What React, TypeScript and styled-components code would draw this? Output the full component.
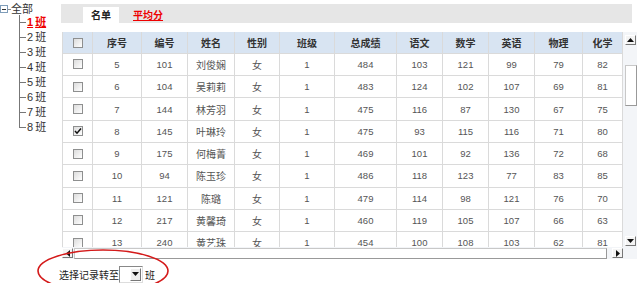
import React from "react";
import styled, { createGlobalStyle } from "styled-components";

const Global = createGlobalStyle`
  html, body { margin: 0; padding: 0; background: #fff; }
  body { font-family: "Liberation Sans", "Noto Sans CJK SC", sans-serif; color: #333; }
`;

const Page = styled.div`
  position: relative;
  display: flex;
  width: 639px;
  height: 283px;
  overflow: hidden;
`;

const Tree = styled.div`
  width: 61px;
  flex: none;
  font-family: "Liberation Sans", "Noto Sans CJK SC", sans-serif;
  font-size: 11px;
  color: #333;
`;

const RootRow = styled.div`
  display: flex;
  align-items: center;
  height: 15px;
`;

const MinusBox = styled.span`
  box-sizing: border-box;
  width: 8px;
  height: 8px;
  margin-top: 3px;
  border: 1px solid #7f9db9;
  background: #fff;
  display: flex;
  align-items: center;
  justify-content: center;
  &::after {
    content: "";
    width: 4px;
    height: 1px;
    background: #333;
  }
`;

const Dash = styled.span`
  width: 3px;
  height: 1px;
  margin-top: 3px;
  background: #888;
`;

const Children = styled.div`
  margin-left: 19px;
`;

const Item = styled.div<{ $last?: boolean; $active?: boolean }>`
  position: relative;
  height: 15px;
  line-height: 15px;
  padding-left: 8px;
  color: ${(p) => (p.$active ? "#e00" : "#333")};
  font-weight: ${(p) => (p.$active ? "bold" : "normal")};
  text-decoration: ${(p) => (p.$active ? "underline" : "none")};
  &::before {
    content: "";
    position: absolute;
    left: 0;
    top: 7px;
    width: 7px;
    height: 1px;
    background: #777;
  }
  &::after {
    content: "";
    position: absolute;
    left: 0;
    top: 0;
    width: 1px;
    height: ${(p) => (p.$last ? "8px" : "15px")};
    background: #777;
  }
`;

const Num = styled.span`
  margin-right: 2px;
`;

const Main = styled.div`
  display: flex;
  flex-direction: column;
  width: 578px;
  padding-top: 4px;
`;

const TabBar = styled.div`
  display: flex;
  align-items: flex-end;
  width: 571px;
  height: 20px;
  padding-left: 22px;
  box-sizing: border-box;
  background: #e6e6e6;
`;

const Tab = styled.div<{ $active?: boolean }>`
  height: 16px;
  line-height: 16px;
  padding: 0 8px;
  margin-right: 6px;
  font-family: "Noto Sans CJK SC", sans-serif;
  font-size: 10px;
  font-weight: bold;
  background: ${(p) => (p.$active ? "#fff" : "transparent")};
  color: ${(p) => (p.$active ? "#222" : "#e00")};
  text-decoration: ${(p) => (p.$active ? "none" : "underline")};
`;

const GridArea = styled.div`
  display: grid;
  grid-template-columns: 561px 14px;
  grid-template-rows: 215px 12px;
  margin-top: 9px;
  margin-left: 1px;
`;

const Viewport = styled.div`
  grid-column: 1;
  grid-row: 1;
  overflow: hidden;
`;

const COLS = "31px 49px 46px 47px 45px 55px 62px 46px 46px 46px 48px 40px";

const Row = styled.div<{ $head?: boolean }>`
  display: grid;
  grid-template-columns: ${COLS};
  height: ${(p) => (p.$head ? "21.3px" : "22.3px")};
  background: ${(p) => (p.$head ? "#d8e4f2" : "#fff")};
`;

const Cell = styled.div<{ $head?: boolean; $cjk?: boolean }>`
  box-sizing: border-box;
  display: flex;
  align-items: center;
  justify-content: center;
  border-right: 1px solid #dadada;
  border-bottom: 1px solid #dadada;
  &:first-child { border-left: 1px solid #dadada; }
  font-family: ${(p) =>
    p.$head || p.$cjk ? '"Noto Sans CJK SC", sans-serif' : '"Liberation Sans", sans-serif'};
  font-size: ${(p) => (p.$head || p.$cjk ? "10px" : "9.5px")};
  font-weight: ${(p) => (p.$head ? "bold" : "normal")};
  color: ${(p) => (p.$head ? "#333" : "#555")};
`;

const CheckBox = styled.span`
  box-sizing: border-box;
  width: 10px;
  height: 10px;
  border: 1px solid #8e8f8f;
  background: linear-gradient(135deg, #dcdcdc, #fff);
  display: flex;
  align-items: center;
  justify-content: center;
`;

const VScroll = styled.div`
  grid-column: 2;
  grid-row: 1 / 3;
  display: flex;
  flex-direction: column;
  align-items: center;
  padding: 3px 0 13px 1px;
  box-sizing: border-box;
  background: #f3f5f8;
`;

const ArrowBtn = styled.div`
  box-sizing: border-box;
  width: 11px;
  height: 10px;
  flex: none;
  display: flex;
  align-items: center;
  justify-content: center;
  background: #f4f4f4;
  border-top: 1px solid #fff;
  border-left: 1px solid #fff;
  border-right: 1px solid #777;
  border-bottom: 1px solid #777;
`;

const VThumb = styled.div`
  box-sizing: border-box;
  width: 12px;
  height: 41px;
  margin-top: 20px;
  background: #fff;
  border: 1px solid #c8c8c8;
  border-right-color: #999;
  border-bottom-color: #999;
`;

const Spacer = styled.div`
  flex: 1;
`;

const HScroll = styled.div`
  grid-column: 1;
  grid-row: 2;
  display: flex;
  align-items: center;
  background: #f3f5f8;
`;

const HThumb = styled.div`
  box-sizing: border-box;
  width: 533px;
  height: 11px;
  margin-left: 1px;
  background: #fff;
  border: 1px solid #c8c8c8;
  border-right-color: #999;
  border-bottom-color: #999;
`;

const HGap = styled.div`
  flex: 1;
`;

const BottomBar = styled.div`
  display: flex;
  align-items: center;
  height: 18px;
  margin-top: 6px;
  margin-left: -2px;
  font-family: "Noto Sans CJK SC", sans-serif;
  font-size: 10px;
  color: #222;
`;

const Select = styled.div`
  box-sizing: border-box;
  display: flex;
  justify-content: flex-end;
  align-items: center;
  width: 24px;
  height: 17px;
  margin: 0 2px 0 0;
  padding-right: 1px;
  background: #fff;
  border: 1px solid #888;
  border-right-color: #ddd;
  border-bottom-color: #ddd;
`;

const DropBtn = styled(ArrowBtn)`
  height: 13px;
  width: 11px;
  background: #eee;
`;

const Annotation = styled.svg`
  position: absolute;
  left: 36px;
  top: 248px;
  pointer-events: none;
`;

const Tri = ({ dir }: { dir: "up" | "down" | "left" | "right" }) => {
  const pts = {
    up: "0,4 3.5,0 7,4",
    down: "0,0 3.5,4 7,0",
    left: "4,0 0,3.5 4,7",
    right: "0,0 4,3.5 0,7",
  }[dir];
  const horiz = dir === "left" || dir === "right";
  return (
    <svg width={horiz ? 4 : 7} height={horiz ? 7 : 4} viewBox={horiz ? "0 0 4 7" : "0 0 7 4"}>
      <polygon points={pts} fill="#111" />
    </svg>
  );
};

const Check = ({ checked }: { checked?: boolean }) => (
  <CheckBox>
    {checked && (
      <svg width="8" height="8" viewBox="0 0 8 8">
        <path d="M1 4 L3 6.2 L7 1.5" stroke="#111" strokeWidth="1.5" fill="none" />
      </svg>
    )}
  </CheckBox>
);

const headers = ["序号", "编号", "姓名", "性别", "班级", "总成绩", "语文", "数学", "英语", "物理", "化学"];

type R = [number, number, string, string, number, number, number, number, number, number, number];
const rows: R[] = [
  [5, 101, "刘俊娴", "女", 1, 484, 103, 121, 99, 79, 82],
  [6, 104, "吴莉莉", "女", 1, 483, 124, 102, 107, 69, 81],
  [7, 144, "林芳羽", "女", 1, 475, 116, 87, 130, 67, 75],
  [8, 145, "叶琳玲", "女", 1, 475, 93, 115, 116, 71, 80],
  [9, 175, "何梅菁", "女", 1, 469, 101, 92, 136, 72, 68],
  [10, 94, "陈玉珍", "女", 1, 486, 118, 123, 77, 83, 85],
  [11, 121, "陈璐", "女", 1, 479, 114, 98, 121, 76, 70],
  [12, 217, "黄馨琦", "女", 1, 460, 119, 105, 107, 66, 63],
  [13, 240, "黄艺珠", "女", 1, 454, 100, 108, 103, 62, 81],
];

const classes = [1, 2, 3, 4, 5, 6, 7, 8];

export default function App() {
  return (
    <Page>
      <Global />
      <Tree>
        <RootRow>
          <MinusBox />
          <Dash />
          <span>全部</span>
        </RootRow>
        <Children>
          {classes.map((c, i) => (
            <Item key={c} $active={i === 0} $last={i === classes.length - 1}>
              <Num>{c}</Num>班
            </Item>
          ))}
        </Children>
      </Tree>
      <Main>
        <TabBar>
          <Tab $active>名单</Tab>
          <Tab>平均分</Tab>
        </TabBar>
        <GridArea>
          <Viewport>
            <Row $head>
              <Cell $head>
                <Check />
              </Cell>
              {headers.map((h) => (
                <Cell $head key={h}>
                  {h}
                </Cell>
              ))}
            </Row>
            {rows.map((r) => (
              <Row key={r[0]}>
                <Cell>
                  <Check checked={r[0] === 8} />
                </Cell>
                {r.map((v, j) => (
                  <Cell key={j} $cjk={j === 2 || j === 3}>
                    {v}
                  </Cell>
                ))}
              </Row>
            ))}
          </Viewport>
          <VScroll>
            <ArrowBtn>
              <Tri dir="up" />
            </ArrowBtn>
            <VThumb />
            <Spacer />
            <ArrowBtn>
              <Tri dir="down" />
            </ArrowBtn>
          </VScroll>
          <HScroll>
            <ArrowBtn>
              <Tri dir="left" />
            </ArrowBtn>
            <HThumb />
            <HGap />
            <ArrowBtn>
              <Tri dir="right" />
            </ArrowBtn>
          </HScroll>
        </GridArea>
        <BottomBar>
          <span>选择记录转至</span>
          <Select>
            <DropBtn>
              <Tri dir="down" />
            </DropBtn>
          </Select>
          <span>班</span>
        </BottomBar>
      </Main>
      <Annotation width="134" height="46" viewBox="0 0 134 46">
        <ellipse cx="67" cy="23" rx="65" ry="21" fill="none" stroke="#d41a1a" strokeWidth="1.6" />
      </Annotation>
    </Page>
  );
}
